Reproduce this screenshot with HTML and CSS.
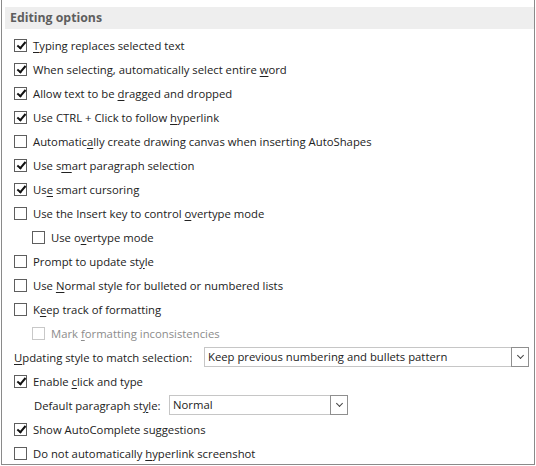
FILE: index.html
```html
<!DOCTYPE html>
<html>
<head>
<meta charset="utf-8">
<link rel="stylesheet" href="styles.css">
</head>
<body>
<div class="panel">
  <div class="header">Editing options</div>
  <div class="list">
    <div class="row"><span class="cb on"></span><span class="lbl"><u>T</u>yping replaces selected text</span></div>
    <div class="row"><span class="cb on"></span><span class="lbl">When selecting, automatically select entire <u>w</u>ord</span></div>
    <div class="row"><span class="cb on"></span><span class="lbl">Allow text to be <u>d</u>ragged and dropped</span></div>
    <div class="row"><span class="cb on"></span><span class="lbl">Use CTRL + Click to follow <u>h</u>yperlink</span></div>
    <div class="row"><span class="cb"></span><span class="lbl">Automatic<u>a</u>lly create drawing canvas when inserting AutoShapes</span></div>
    <div class="row"><span class="cb on"></span><span class="lbl">Use s<u>m</u>art paragraph selection</span></div>
    <div class="row"><span class="cb on"></span><span class="lbl">Us<u>e</u> smart cursoring</span></div>
    <div class="row"><span class="cb"></span><span class="lbl">Use the Insert key to control <u>o</u>vertype mode</span></div>
    <div class="row sub"><span class="cb"></span><span class="lbl">Use o<u>v</u>ertype mode</span></div>
    <div class="row"><span class="cb"></span><span class="lbl">Prompt to update st<u>y</u>le</span></div>
    <div class="row"><span class="cb"></span><span class="lbl">Use <u>N</u>ormal style for bulleted or numbered lists</span></div>
    <div class="row"><span class="cb"></span><span class="lbl">K<u>e</u>ep track of formatting</span></div>
    <div class="row sub disabled"><span class="cb"></span><span class="lbl">Mark <u>f</u>ormatting inconsistencies</span></div>
    <div class="row field"><span class="flabel wide"><u>U</u>pdating style to match selection:</span><span class="select big"><span class="val">Keep previous numbering and bullets pattern</span><span class="btn"></span></span></div>
    <div class="row"><span class="cb on"></span><span class="lbl">Enable <u>c</u>lick and type</span></div>
    <div class="row field sub2"><span class="flabel narrow">Default paragraph st<u>y</u>le:</span><span class="select small"><span class="val">Normal</span><span class="btn"></span></span></div>
    <div class="row"><span class="cb on"></span><span class="lbl">Show AutoComplete suggestions</span></div>
    <div class="row"><span class="cb"></span><span class="lbl">Do not automatically <u>h</u>yperlink screenshot</span></div>
  </div>
</div>
</body>
</html>
```
FILE: styles.css
```css
html, body {
  margin: 0;
  padding: 0;
  background: #ffffff;
}
body {
  font-family: "Open Sans", "Noto Sans", "Liberation Sans", sans-serif;
  font-size: 11.3px;
  color: #222222;
}
.panel {
  margin-left: 1px;
  width: 532px;
  height: 464px;
  border: 1px solid #8a8a8a;
  border-top: none;
  overflow: hidden;
}
.header {
  margin: 7px 0 0 3px;
  height: 22px;
  line-height: 22px;
  padding-left: 5px;
  background: #eeeeee;
  font-weight: 700;
  font-size: 12.3px;
  color: #5e5e5e;
}
.list {
  padding: 4px 0 0 12px;
}
.row {
  height: 24px;
  display: flex;
  align-items: center;
  white-space: nowrap;
}
.row.sub {
  padding-left: 18px;
}
.cb {
  flex: none;
  box-sizing: border-box;
  width: 13px;
  height: 13px;
  border: 1px solid #5e5e5e;
  background: #fff;
  margin-right: 6px;
  position: relative;
}
.cb.on::after {
  content: "";
  position: absolute;
  left: 3.5px;
  top: 0.5px;
  width: 3px;
  height: 7px;
  border-right: 2px solid #111;
  border-bottom: 2px solid #111;
  transform: rotate(40deg);
}
.disabled .cb {
  border-color: #c8c8c8;
}
.disabled .lbl {
  color: #8c8c8c;
}
.lbl u, .flabel u {
  text-decoration: underline;
  text-underline-offset: 2px;
}
.flabel {
  flex: none;
}
.flabel.wide {
  width: 190px;
}
.row.sub2 {
  padding-left: 20px;
}
.flabel.narrow {
  width: 135px;
}
.select {
  box-sizing: border-box;
  height: 20px;
  border: 1px solid #c6c6c6;
  display: flex;
  align-items: stretch;
  background: #fff;
}
.select.big {
  width: 325px;
}
.select.small {
  width: 179px;
}
.val {
  flex: 1;
  padding-left: 3px;
  line-height: 18px;
  color: #222222;
}
.btn {
  flex: none;
  box-sizing: border-box;
  width: 18px;
  margin: -1px -1px -1px 0;
  border: 1px solid #8f8f8f;
  position: relative;
}
.btn::after {
  content: "";
  position: absolute;
  left: 6px;
  top: 5px;
  width: 4px;
  height: 4px;
  border-right: 1.5px solid #444;
  border-bottom: 1.5px solid #444;
  transform: rotate(45deg);
}
```
